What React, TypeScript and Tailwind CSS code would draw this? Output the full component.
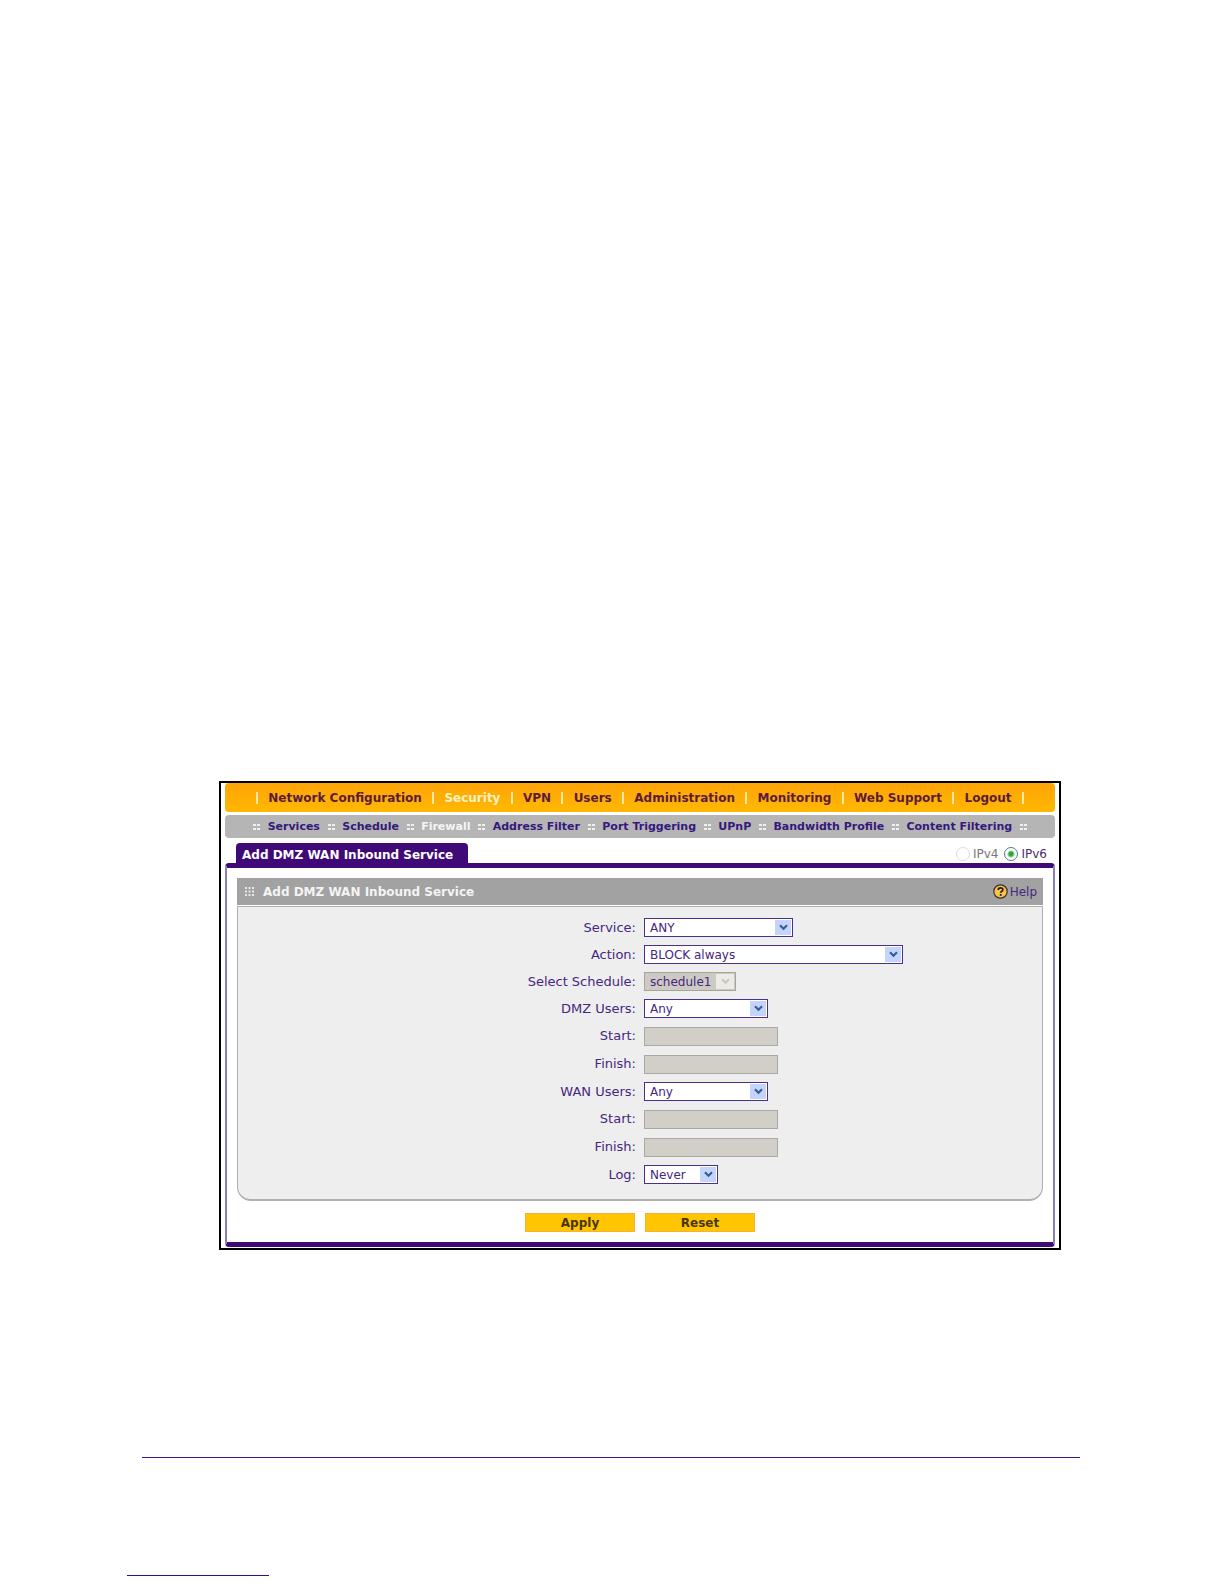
import { Fragment, type ReactNode } from "react";
import clsx from "clsx";

const MAIN_NAV = [
  "Network Configuration",
  "Security",
  "VPN",
  "Users",
  "Administration",
  "Monitoring",
  "Web Support",
  "Logout",
];

const SUB_NAV = [
  "Services",
  "Schedule",
  "Firewall",
  "Address Filter",
  "Port Triggering",
  "UPnP",
  "Bandwidth Profile",
  "Content Filtering",
];

function MainNav() {
  return (
    <nav className="flex h-[29px] items-center justify-between rounded-[4px] bg-linear-to-b from-[#ffa408] to-[#ffb800] px-[31px] pt-px text-[12px] font-bold whitespace-nowrap">
      <span className="h-3 w-[2px] bg-[#ffeaa8]" />
      {MAIN_NAV.map((item) => (
        <Fragment key={item}>
          <a href="#" className={item === "Security" ? "text-[#fff3c4]" : "text-[#5c1a3c]"}>
            {item}
          </a>
          <span className="h-3 w-[2px] bg-[#ffeaa8]" />
        </Fragment>
      ))}
    </nav>
  );
}

function Dots() {
  return (
    <svg className="h-[6px] w-[7px] shrink-0 fill-[#f0f0f0]" viewBox="0 0 7 6" aria-hidden="true">
      <path d="M0 0h3v2H0zM4 0h3v2H4zM0 4h3v2H0zM4 4h3v2H4z" />
    </svg>
  );
}

function SubNav() {
  return (
    <nav className="mt-[3px] flex h-[23px] items-center justify-between rounded-[4px] bg-[#b5b5b5] px-[28px] pt-px text-[11px] font-bold whitespace-nowrap">
      <Dots />
      {SUB_NAV.map((item) => (
        <Fragment key={item}>
          <a href="#" className={item === "Firewall" ? "text-[#f4f4f4]" : "text-[#36187c]"}>
            {item}
          </a>
          <Dots />
        </Fragment>
      ))}
    </nav>
  );
}

function IpVersion() {
  return (
    <div className="mr-2 flex items-center gap-[6px] text-[12px]">
      <label className="flex items-center gap-[3px] text-[#777]">
        <input
          type="radio"
          name="ip"
          className="size-[14px] appearance-none rounded-full border border-[#dcdcdc] bg-white"
        />
        IPv4
      </label>
      <label className="flex items-center gap-[3px] text-[#4a2a6e]">
        <input
          type="radio"
          name="ip"
          defaultChecked
          className="size-[14px] appearance-none rounded-full border border-[#4b7c96] bg-[radial-gradient(circle,#2fa62f_0_2px,#ffffff_4px)]"
        />
        IPv6
      </label>
    </div>
  );
}

function HelpLink() {
  return (
    <a href="#" className="flex items-center gap-[2px] text-[12px] text-[#45277e]">
      <svg className="size-[15px]" viewBox="0 0 15 15" aria-hidden="true">
        <circle cx="7.5" cy="7.5" r="6.7" fill="#f7c545" stroke="#3b2a33" strokeWidth="1.2" />
        <path
          d="M5.2 6.1c0-3 4.7-3 4.7-.4 0 1.6-2.2 1.5-2.2 3.1"
          fill="none"
          stroke="#2c1a22"
          strokeWidth="1.7"
        />
        <path d="M6.8 10h1.8v1.8H6.8z" fill="#2c1a22" />
      </svg>
      Help
    </a>
  );
}

function Row({ id, label, tall, children }: { id: string; label: string; tall?: boolean; children: ReactNode }) {
  return (
    <div className={clsx("grid grid-cols-2 items-center", tall ? "h-7" : "h-[27px]")}>
      <label htmlFor={id} className="pr-1 text-right">
        {label}:
      </label>
      <div className="pl-1">{children}</div>
    </div>
  );
}

type SelectRowProps = { id: string; label: string; value: string; width: string; disabled?: boolean };

function SelectRow({ id, label, value, width, disabled }: SelectRowProps) {
  return (
    <Row id={id} label={label}>
      <div className={clsx("relative", width)}>
        <select
          id={id}
          disabled={disabled}
          className={clsx(
            "block h-[19px] w-full appearance-none border pl-[5px] text-[12px] leading-[16px] opacity-100",
            disabled ? "border-[#a5a59d] bg-[#cdcac3]" : "border-[#4c2f8c] bg-white",
          )}
        >
          <option>{value}</option>
        </select>
        <span
          className={clsx(
            "pointer-events-none absolute top-[2px] right-[2px] flex h-[15px] items-center justify-center",
            disabled ? "w-[18px] bg-[#ecebe6] text-[#c9c8bd]" : "w-4 bg-[#c3d5fb] text-[#3d5a94]",
          )}
        >
          <svg className="h-[7px] w-[9px]" viewBox="0 0 9 7" fill="none" stroke="currentColor" strokeWidth="2.2">
            <path d="M1 1.2l3.5 3.5L8 1.2" />
          </svg>
        </span>
      </div>
    </Row>
  );
}

function AddressRow({ id, label }: { id: string; label: string }) {
  return (
    <Row id={id} label={label} tall>
      <input
        id={id}
        type="text"
        disabled
        className="block h-[19px] w-[134px] border border-[#a9a9a4] bg-[#d2cfc8] px-1"
      />
    </Row>
  );
}

function ServiceForm() {
  return (
    <form>
      <section className="mx-[10px] mt-[10px]">
        <header className="flex h-[27px] items-center justify-between bg-[#a2a2a2] pr-[6px] pl-2">
          <h2 className="flex items-center gap-[9px] text-[12px] font-bold text-[#f4f4f4]">
            <svg className="size-[9px] fill-[#e8e8e8]" viewBox="0 0 9 9" aria-hidden="true">
              <path d="M0 0h2v2H0zM3.5 0h2v2h-2zM7 0h2v2H7zM0 3.5h2v2H0zM3.5 3.5h2v2h-2zM7 3.5h2v2H7zM0 7h2v2H0zM3.5 7h2v2h-2zM7 7h2v2H7z" />
            </svg>
            Add DMZ WAN Inbound Service
          </h2>
          <HelpLink />
        </header>
        <div className="mt-px rounded-b-[14px] border border-b-2 border-[#b0b0b0] bg-[#eeeeee] pt-[7px] pb-[11px] text-[13px] text-[#45277e]">
          <SelectRow id="service" label="Service" value="ANY" width="w-[149px]" />
          <SelectRow id="action" label="Action" value="BLOCK always" width="w-[259px]" />
          <SelectRow id="schedule" label="Select Schedule" value="schedule1" width="w-[92px]" disabled />
          <SelectRow id="dmz-users" label="DMZ Users" value="Any" width="w-[124px]" />
          <AddressRow id="dmz-start" label="Start" />
          <AddressRow id="dmz-finish" label="Finish" />
          <SelectRow id="wan-users" label="WAN Users" value="Any" width="w-[124px]" />
          <AddressRow id="wan-start" label="Start" />
          <AddressRow id="wan-finish" label="Finish" />
          <SelectRow id="log" label="Log" value="Never" width="w-[74px]" />
        </div>
      </section>
      <div className="mt-3 mb-[10px] flex justify-center gap-[10px] text-[12px] font-bold text-[#4a3510]">
        <button type="button" className="h-[19px] w-[110px] border border-[#f3b23c] bg-[#ffc600] leading-[16px]">
          Apply
        </button>
        <button type="reset" className="h-[19px] w-[110px] border border-[#f3b23c] bg-[#ffc600] leading-[16px]">
          Reset
        </button>
      </div>
    </form>
  );
}

export default function App() {
  return (
    <div className="flex min-h-screen flex-col bg-white pt-[781px] font-['Verdana','DejaVu_Sans',sans-serif]">
      <main className="mr-[163px] ml-[219px] border-2 border-black px-1 pb-px">
        <MainNav />
        <SubNav />
        <div className="mt-[5px] flex items-end justify-between">
          <h1 className="ml-[11px] flex h-5 items-center rounded-t-[4px] bg-[#3f0a78] pt-[3px] pr-[15px] pl-[6px] text-[12px] font-bold text-white">
            Add DMZ WAN Inbound Service
          </h1>
          <IpVersion />
        </div>
        <div className="rounded-[4px] border-x-2 border-y-[5px] border-x-[#8a80b4] border-y-[#3f0a78]">
          <ServiceForm />
        </div>
      </main>
      <footer className="mt-auto pb-2">
        <hr className="mr-36 ml-[142px] border-t border-[#3a1590]" />
        <a href="#" aria-label="Back to contents" className="mt-[117px] ml-[127px] block w-[142px] border-b border-[#1c1a86]" />
      </footer>
    </div>
  );
}
